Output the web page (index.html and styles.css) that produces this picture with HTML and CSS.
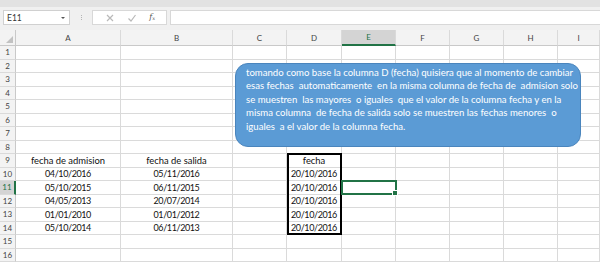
FILE: index.html
```html
<!DOCTYPE html>
<html>
<head>
<meta charset="utf-8">
<link rel="stylesheet" href="styles.css">
</head>
<body>
<div class="app">
  <div class="topstrip"></div>
  <div class="fbar">
    <div class="namebox"><span class="nb-text">E11</span><span class="nb-arrow"></span></div>
    <div class="dots"><i></i><i></i><i></i></div>
    <div class="fxbox">
      <svg class="ic" width="10" height="10" viewBox="0 0 10 10"><path d="M2 2L8 8M8 2L2 8" stroke="#b9b9b9" stroke-width="1.2" fill="none"/></svg>
      <svg class="ic" width="10" height="10" viewBox="0 0 10 10"><path d="M1.5 5.5L4 8L8.5 2" stroke="#b9b9b9" stroke-width="1.2" fill="none"/></svg>
      <span class="fx">f<sub>x</sub></span>
    </div>
    <div class="finput"></div>
  </div>
  <div class="sheet">
    <div class="grid">
      <div class="ch corner"><span class="tri"></span></div>
      <div class="ch">A</div><div class="ch">B</div><div class="ch">C</div><div class="ch">D</div><div class="ch sel">E</div><div class="ch">F</div><div class="ch">G</div><div class="ch">H</div><div class="ch">I</div>

      <div class="rh">1</div><div class="c"></div><div class="c"></div><div class="c"></div><div class="c"></div><div class="c"></div><div class="c"></div><div class="c"></div><div class="c"></div><div class="c"></div>
      <div class="rh">2</div><div class="c"></div><div class="c"></div><div class="c"></div><div class="c"></div><div class="c"></div><div class="c"></div><div class="c"></div><div class="c"></div><div class="c"></div>
      <div class="rh">3</div><div class="c"></div><div class="c"></div><div class="c"></div><div class="c"></div><div class="c"></div><div class="c"></div><div class="c"></div><div class="c"></div><div class="c"></div>
      <div class="rh">4</div><div class="c"></div><div class="c"></div><div class="c"></div><div class="c"></div><div class="c"></div><div class="c"></div><div class="c"></div><div class="c"></div><div class="c"></div>
      <div class="rh">5</div><div class="c"></div><div class="c"></div><div class="c"></div><div class="c"></div><div class="c"></div><div class="c"></div><div class="c"></div><div class="c"></div><div class="c"></div>
      <div class="rh">6</div><div class="c"></div><div class="c"></div><div class="c"></div><div class="c"></div><div class="c"></div><div class="c"></div><div class="c"></div><div class="c"></div><div class="c"></div>
      <div class="rh">7</div><div class="c"></div><div class="c"></div><div class="c"></div><div class="c"></div><div class="c"></div><div class="c"></div><div class="c"></div><div class="c"></div><div class="c"></div>
      <div class="rh">8</div><div class="c"></div><div class="c"></div><div class="c"></div><div class="c"></div><div class="c"></div><div class="c"></div><div class="c"></div><div class="c"></div><div class="c"></div>
      <div class="rh">9</div><div class="c">fecha de admision</div><div class="c">fecha de salida</div><div class="c"></div><div class="c">fecha</div><div class="c"></div><div class="c"></div><div class="c"></div><div class="c"></div><div class="c"></div>
      <div class="rh">10</div><div class="c num">04/10/2016</div><div class="c num">05/11/2016</div><div class="c"></div><div class="c num">20/10/2016</div><div class="c"></div><div class="c"></div><div class="c"></div><div class="c"></div><div class="c"></div>
      <div class="rh sel">11</div><div class="c num">05/10/2015</div><div class="c num">06/11/2015</div><div class="c"></div><div class="c num">20/10/2016</div><div class="c"></div><div class="c"></div><div class="c"></div><div class="c"></div><div class="c"></div>
      <div class="rh">12</div><div class="c num">04/05/2013</div><div class="c num">20/07/2014</div><div class="c"></div><div class="c num">20/10/2016</div><div class="c"></div><div class="c"></div><div class="c"></div><div class="c"></div><div class="c"></div>
      <div class="rh">13</div><div class="c num">01/01/2010</div><div class="c num">01/01/2012</div><div class="c"></div><div class="c num">20/10/2016</div><div class="c"></div><div class="c"></div><div class="c"></div><div class="c"></div><div class="c"></div>
      <div class="rh">14</div><div class="c num">05/10/2014</div><div class="c num">06/11/2013</div><div class="c"></div><div class="c num">20/10/2016</div><div class="c"></div><div class="c"></div><div class="c"></div><div class="c"></div><div class="c"></div>
      <div class="rh">15</div><div class="c"></div><div class="c"></div><div class="c"></div><div class="c"></div><div class="c"></div><div class="c"></div><div class="c"></div><div class="c"></div><div class="c"></div>
      <div class="rh">16</div><div class="c"></div><div class="c"></div><div class="c"></div><div class="c"></div><div class="c"></div><div class="c"></div><div class="c"></div><div class="c"></div><div class="c"></div>
    </div>
    <div class="rangebox"></div>
    <div class="selbox"><span class="handle"></span></div>
    <div class="shape">
      <div class="line">tomando como base la columna D (fecha) quisiera que al momento de cambiar</div>
      <div class="line">esas fechas  automaticamente  en la misma columna de fecha de  admision solo</div>
      <div class="line">se muestren  las mayores  o iguales  que el valor de la columna fecha y en la</div>
      <div class="line">misma columna  de fecha de salida solo se muestren las fechas menores  o</div>
      <div class="line">iguales  a el valor de la columna fecha.</div>
    </div>
  </div>
</div>
</body>
</html>
```

FILE: styles.css
```css
html, body {
  margin: 0;
  padding: 0;
  background: #ffffff;
}
body {
  width: 600px;
  height: 263px;
  overflow: hidden;
  font-family: Lato, "Open Sans", sans-serif;
}
.app {
  display: flex;
  flex-direction: column;
  width: 600px;
  height: 263px;
}
.topstrip {
  height: 7px;
  background: #e2e2e2;
}
.fbar {
  height: 23px;
  background: #f0f0f0;
  display: flex;
  align-items: flex-start;
  padding-top: 3px;
  box-sizing: border-box;
}
.namebox {
  margin-left: 3px;
  width: 67px;
  height: 15px;
  background: #fff;
  border: 1px solid #d0d0d0;
  box-sizing: border-box;
  display: flex;
  align-items: center;
  justify-content: space-between;
  padding: 0 4px 0 3px;
}
.nb-text {
  font-size: 8.5px;
  color: #333;
}
.nb-arrow {
  width: 0;
  height: 0;
  border-left: 2px solid transparent;
  border-right: 2px solid transparent;
  border-top: 2px solid #555;
}
.dots {
  width: 22px;
  height: 15px;
  display: flex;
  flex-direction: column;
  align-items: center;
  justify-content: center;
  gap: 1px;
}
.dots i {
  display: block;
  width: 1px;
  height: 1px;
  background: #b5b5b5;
}
.fxbox {
  width: 75px;
  height: 15px;
  background: #fff;
  border: 1px solid #d8d8d8;
  box-sizing: border-box;
  display: flex;
  align-items: center;
  justify-content: space-around;
  padding: 0 5px 0 6px;
}
.fx {
  font-family: "DejaVu Serif", serif;
  font-style: italic;
  font-size: 8px;
  color: #555;
  line-height: 8px;
}
.fx sub {
  font-size: 5px;
  vertical-align: -1px;
}
.finput {
  flex: 1;
  margin-left: 3px;
  height: 15px;
  background: #fff;
  border: 1px solid #d8d8d8;
  border-right: none;
  box-sizing: border-box;
}
.sheet {
  position: relative;
  flex: 1;
  overflow: hidden;
}
.grid {
  display: grid;
  grid-template-columns: 16px 105px 112px 54px 55px 54px 54px 54px 54px 1fr;
  grid-template-rows: 16px;
  grid-auto-rows: 13.5px;
}
.ch {
  background: #f3f3f3;
  border-bottom: 1px solid #c9c9c9;
  border-right: 1px solid #dadada;
  box-sizing: border-box;
  font-size: 8px;
  color: #444;
  display: flex;
  align-items: center;
  justify-content: center;
}
.ch.sel {
  background: #d4d4d4;
  border-bottom: 2px solid #217346;
  color: #217346;
}
.corner {
  position: relative;
  border-right: 1px solid #c9c9c9;
}
.tri {
  position: absolute;
  right: 2px;
  bottom: 2px;
  width: 0;
  height: 0;
  border-left: 7px solid transparent;
  border-bottom: 7px solid #c2c2c2;
}
.rh {
  background: #f3f3f3;
  border-right: 1px solid #c9c9c9;
  border-bottom: 1px solid #dadada;
  box-sizing: border-box;
  font-size: 8px;
  color: #444;
  display: flex;
  align-items: center;
  justify-content: center;
}
.rh.sel {
  background: #d4d4d4;
  border-right: 2px solid #217346;
  color: #217346;
}
.c {
  border-right: 1px solid #dadada;
  border-bottom: 1px solid #dadada;
  box-sizing: border-box;
  font-size: 9.4px;
  color: #111;
  display: flex;
  align-items: center;
  justify-content: center;
  white-space: nowrap;
  overflow: hidden;
}
.c.num {
  font-size: 9px;
  letter-spacing: -0.4px;
}
.rangebox {
  position: absolute;
  left: 287px;
  top: 123px;
  width: 55px;
  height: 82px;
  border: 2px solid #000;
  box-sizing: border-box;
}
.selbox {
  position: absolute;
  left: 341px;
  top: 150px;
  width: 56px;
  height: 15px;
  border: 2px solid #217346;
  box-sizing: border-box;
}
.handle {
  position: absolute;
  right: -3px;
  bottom: -3px;
  width: 4px;
  height: 4px;
  background: #217346;
  border: 1px solid #fff;
}
.shape {
  position: absolute;
  left: 235px;
  top: 33px;
  width: 346px;
  height: 84px;
  box-sizing: border-box;
  background: #5b9bd5;
  border: 1px solid #4a85bd;
  border-radius: 13px;
  padding: 2px 0 0 10px;
  color: #fff;
  font-size: 9.6px;
}
.line {
  white-space: pre;
  line-height: 13.4px;
}
```
